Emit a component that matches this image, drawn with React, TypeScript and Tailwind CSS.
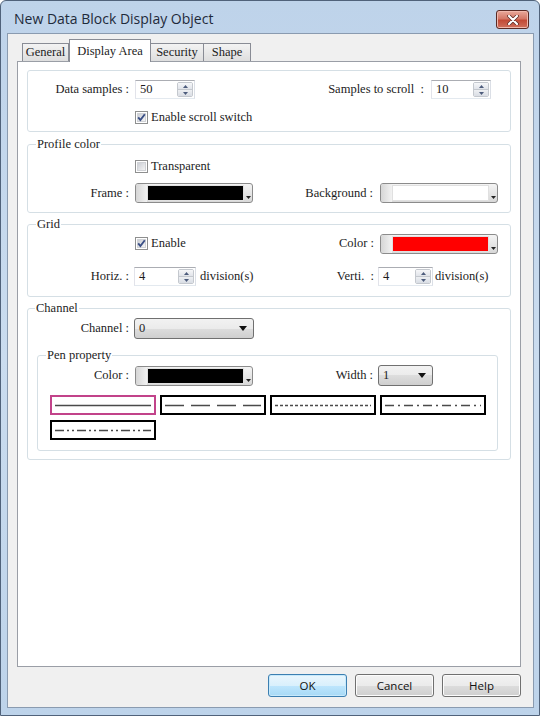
import React from "react";

function Check({ checked }: { checked: boolean }) {
  return (
    <svg width="13" height="13" viewBox="0 0 13 13" className="shrink-0 block">
      <defs>
        <linearGradient id="cbg" x1="0" y1="0" x2="1" y2="1">
          <stop offset="0" stopColor="#c9ccd3" />
          <stop offset="1" stopColor="#f7f7f7" />
        </linearGradient>
      </defs>
      <rect x="0.5" y="0.5" width="12" height="12" fill="#fff" stroke="#8e8f8f" />
      <rect x="2.5" y="2.5" width="8" height="8" fill="url(#cbg)" stroke="#d0d2d6" />
      {checked && (
        <path d="M3.2 6.3 L5.4 9 L9.8 3.2" fill="none" stroke="#3a4f86" strokeWidth="1.9" />
      )}
    </svg>
  );
}

function Spin({ value, className }: { value: string; className: string }) {
  return (
    <div
      className={`flex h-[19px] bg-white border border-t-[#abadb3] border-l-[#e2e3ea] border-r-[#dbdfe6] border-b-[#e3e9ef] ${className}`}
    >
      <div className="flex-1 pl-[4px] leading-[17px]">{value}</div>
      <div className="w-[16px] my-[1px] mr-[1px] flex flex-col border border-[#c4c8ce] rounded-[2px] overflow-hidden">
        <div className="flex-1 flex items-center justify-center bg-gradient-to-b from-[#f6f7f9] to-[#e1e4ea] border-b border-[#c4c8ce]">
          <svg width="5" height="3" viewBox="0 0 5 3"><path d="M0 3 L2.5 0 L5 3 Z" fill="#4d5c7c" /></svg>
        </div>
        <div className="flex-1 flex items-center justify-center bg-gradient-to-b from-[#eef0f3] to-[#d9dde4]">
          <svg width="5" height="3" viewBox="0 0 5 3"><path d="M0 0 L2.5 3 L5 0 Z" fill="#4d5c7c" /></svg>
        </div>
      </div>
    </div>
  );
}

function ColorPick({ color, className }: { color: string; className: string }) {
  return (
    <div
      className={`flex h-[20px] border border-[#8b8b8b] rounded-[3px] overflow-hidden bg-gradient-to-b from-[#f4f4f4] to-[#d8d8d8] ${className}`}
    >
      <div className="w-[11px] bg-gradient-to-r from-[#d6d6d6] to-[#f2f2f2]" />
      <div className="flex-1 my-[1px] border border-[#e0e0e0]" style={{ backgroundColor: color }} />
      <div className="w-[8px] flex items-end justify-center pb-[3px]">
        <svg width="5" height="3" viewBox="0 0 5 3"><path d="M0 0 L2.5 3 L5 0 Z" fill="#222" /></svg>
      </div>
    </div>
  );
}

function Combo({ value, className }: { value: string; className: string }) {
  return (
    <div
      className={`flex items-center h-[21px] border border-[#707070] rounded-[3px] bg-[linear-gradient(#f2f2f2,#ebebeb_50%,#dddddd_50%,#cfcfcf)] ${className}`}
    >
      <div className="flex-1 pl-[4px] leading-[19px]">{value}</div>
      <svg width="8" height="5" viewBox="0 0 8 5" className="mr-[6px]"><path d="M0 0 L4 5 L8 0 Z" fill="#111" /></svg>
    </div>
  );
}

function LineBox({ dash, selected }: { dash?: string; selected?: boolean }) {
  return (
    <div
      className={`h-[20px] bg-white border-2 flex items-center px-[3px] ${selected ? "border-[#c2438a]" : "border-black"}`}
    >
      <svg className="w-full h-[3px] block" preserveAspectRatio="none">
        <line x1="0" y1="1.5" x2="100%" y2="1.5" stroke="#4a4a4a" strokeWidth="1.5" strokeDasharray={dash} />
      </svg>
    </div>
  );
}

function Button({ label, primary }: { label: string; primary?: boolean }) {
  return (
    <div
      className={`w-[79px] h-[23px] flex items-center justify-center rounded-[3px] border [font-family:'Open_Sans',sans-serif] text-[11.5px] text-[#111] ${
        primary
          ? "border-[#3c7fb1] bg-[linear-gradient(#eaf6fd,#d9f0fc_50%,#bee6fd_50%,#a7d9f5)] shadow-[inset_0_0_0_1px_#c7e9fb]"
          : "border-[#707070] bg-[linear-gradient(#f2f2f2,#ebebeb_50%,#dddddd_50%,#cfcfcf)] shadow-[inset_0_0_0_1px_#fcfcfc]"
      }`}
    >
      {label}
    </div>
  );
}

export default function App() {
  return (
    <div className="w-[540px] h-[716px] flex flex-col overflow-hidden rounded-t-[6px] border border-[#50627a] bg-gradient-to-b from-[#bed3ea] via-[#cadcef] to-[#bdd3ea] [font-family:'Liberation_Serif','DejaVu_Serif',serif] text-[12.5px] text-[#1c1c1c]">
      {/* title bar */}
      <div className="h-[32px] flex items-start pl-[13px] pr-[10px] shrink-0">
        <span className="mt-[8px] [font-family:'Open_Sans',sans-serif] text-[14px] leading-[20px] text-[#1e2a3a]">
          New Data Block Display Object
        </span>
        <div className="ml-auto mt-[9px] w-[33px] h-[19px] rounded-[3px] border border-[#5a2a24] bg-[linear-gradient(#e9a99b,#d47867_45%,#c24a36_55%,#d0705c)] flex items-center justify-center shadow-[inset_0_0_0_1px_#f0b8ac]">
          <svg width="12" height="10" viewBox="0 0 12 10">
            <path d="M2 1 L10 9 M10 1 L2 9" stroke="#5a2a24" strokeWidth="3.6" strokeLinecap="round" />
            <path d="M2 1 L10 9 M10 1 L2 9" stroke="#fff" strokeWidth="2.2" strokeLinecap="round" />
          </svg>
        </div>
      </div>

      {/* client */}
      <div className="flex-1 ml-[6px] mr-[5px] mb-[7px] bg-[#f0f0f0] flex flex-col pl-[9px] pr-[12px] border border-[#8a9bb0]">
        {/* tabs */}
        <div className="h-[27px] flex items-end shrink-0 pl-[5px]">
          <div className="w-[47px] h-[18px] flex items-center justify-center border border-b-0 border-[#898c95] bg-gradient-to-b from-[#f3f3f3] to-[#dedede]">
            General
          </div>
          <div className="relative z-10 -mb-px w-[82px] h-[23px] flex items-start justify-center pt-[2px] border border-b-0 border-[#898c95] bg-white">
            Display Area
          </div>
          <div className="w-[53px] h-[18px] flex items-center justify-center border border-b-0 border-l-0 border-[#898c95] bg-gradient-to-b from-[#f3f3f3] to-[#dedede]">
            Security
          </div>
          <div className="w-[47px] h-[18px] flex items-center justify-center border border-b-0 border-l-0 border-[#898c95] bg-gradient-to-b from-[#f3f3f3] to-[#dedede]">
            Shape
          </div>
        </div>

        {/* panel */}
        <div className="flex-1 border border-[#9a9ea6] bg-white pt-[8px] px-[9px]">
          {/* group 1 */}
          <div className="border border-[#d5dfe5] rounded-[3px] pt-[9px] pb-[7px]">
            <div className="flex items-center h-[19px]">
              <div className="w-[273px] flex items-center">
                <div className="w-[101px] text-right">Data samples :</div>
                <Spin value="50" className="ml-[6px] w-[60px]" />
              </div>
              <div className="w-[123px] text-right">Samples to scroll {"\u00a0"}:</div>
              <Spin value="10" className="ml-[7px] w-[60px]" />
            </div>
            <div className="flex items-center h-[13px] mt-[12px] pl-[107px]">
              <Check checked />
              <span className="ml-[3px]">Enable scroll switch</span>
            </div>
          </div>

          {/* profile color */}
          <fieldset className="mt-[6px] border border-[#d5dfe5] rounded-[3px] pt-[9px] pb-[9px]">
            <legend className="ml-[8px] px-[1px] leading-[13px]">Profile color</legend>
            <div className="flex items-center h-[13px] pl-[107px]">
              <Check checked={false} />
              <span className="ml-[3px]">Transparent</span>
            </div>
            <div className="flex items-center h-[20px] mt-[10px]">
              <div className="w-[273px] flex items-center">
                <div className="w-[101px] text-right">Frame :</div>
                <ColorPick color="#000000" className="ml-[6px] w-[118px]" />
              </div>
              <div className="w-[72px] text-right">Background :</div>
              <ColorPick color="#ffffff" className="ml-[7px] w-[118px]" />
            </div>
          </fieldset>

          {/* grid */}
          <fieldset className="mt-[5px] border border-[#d5dfe5] rounded-[3px] pt-[3px] pb-[10px]">
            <legend className="ml-[8px] px-[1px] leading-[13px]">Grid</legend>
            <div className="flex items-center h-[19px]">
              <div className="w-[273px] flex items-center pl-[107px]">
                <Check checked />
                <span className="ml-[3px]">Enable</span>
              </div>
              <div className="w-[73px] text-right">Color :</div>
              <ColorPick color="#ff0000" className="ml-[6px] w-[118px] h-[19px]" />
            </div>
            <div className="flex items-center h-[19px] mt-[14px]">
              <div className="w-[273px] flex items-center">
                <div className="w-[101px] text-right">Horiz. :</div>
                <Spin value="4" className="ml-[5px] w-[62px]" />
                <span className="ml-[4px]">division(s)</span>
              </div>
              <div className="w-[73px] text-right">Verti. {"\u00a0"}:</div>
              <Spin value="4" className="ml-[4px] w-[55px]" />
              <span className="ml-[2px]">division(s)</span>
            </div>
          </fieldset>

          {/* channel */}
          <fieldset className="mt-[5px] border border-[#d5dfe5] rounded-[3px] pt-[3px] pb-[8px]">
            <legend className="ml-[7px] px-[1px] leading-[13px]">Channel</legend>
            <div className="flex items-center h-[21px]">
              <div className="w-[101px] text-right">Channel :</div>
              <Combo value="0" className="ml-[5px] w-[120px]" />
            </div>

            <fieldset className="mt-[10px] ml-[9px] mr-[12px] border border-[#d5dfe5] rounded-[3px] pt-[3px] pb-[10px]">
              <legend className="ml-[8px] px-[1px] leading-[13px]">Pen property</legend>
              <div className="flex items-center h-[21px]">
                <div className="w-[263px] flex items-center">
                  <div className="w-[91px] text-right">Color :</div>
                  <ColorPick color="#000000" className="ml-[6px] w-[118px]" />
                </div>
                <div className="w-[72px] text-right">Width :</div>
                <Combo value="1" className="ml-[5px] w-[55px]" />
              </div>
              <div className="mt-[9px] ml-[12px] grid grid-cols-[repeat(4,106px)] gap-x-[4px] gap-y-[5px]">
                <LineBox selected />
                <LineBox dash="19 7" />
                <LineBox dash="3 2" />
                <LineBox dash="9 4 2 4" />
                <LineBox dash="9 3 2 3 2 3" />
              </div>
            </fieldset>
          </fieldset>
        </div>

        {/* buttons */}
        <div className="h-[40px] shrink-0 flex items-start justify-end gap-[8px] pt-[7px]">
          <Button label="OK" primary />
          <Button label="Cancel" />
          <Button label="Help" />
        </div>
      </div>
    </div>
  );
}
